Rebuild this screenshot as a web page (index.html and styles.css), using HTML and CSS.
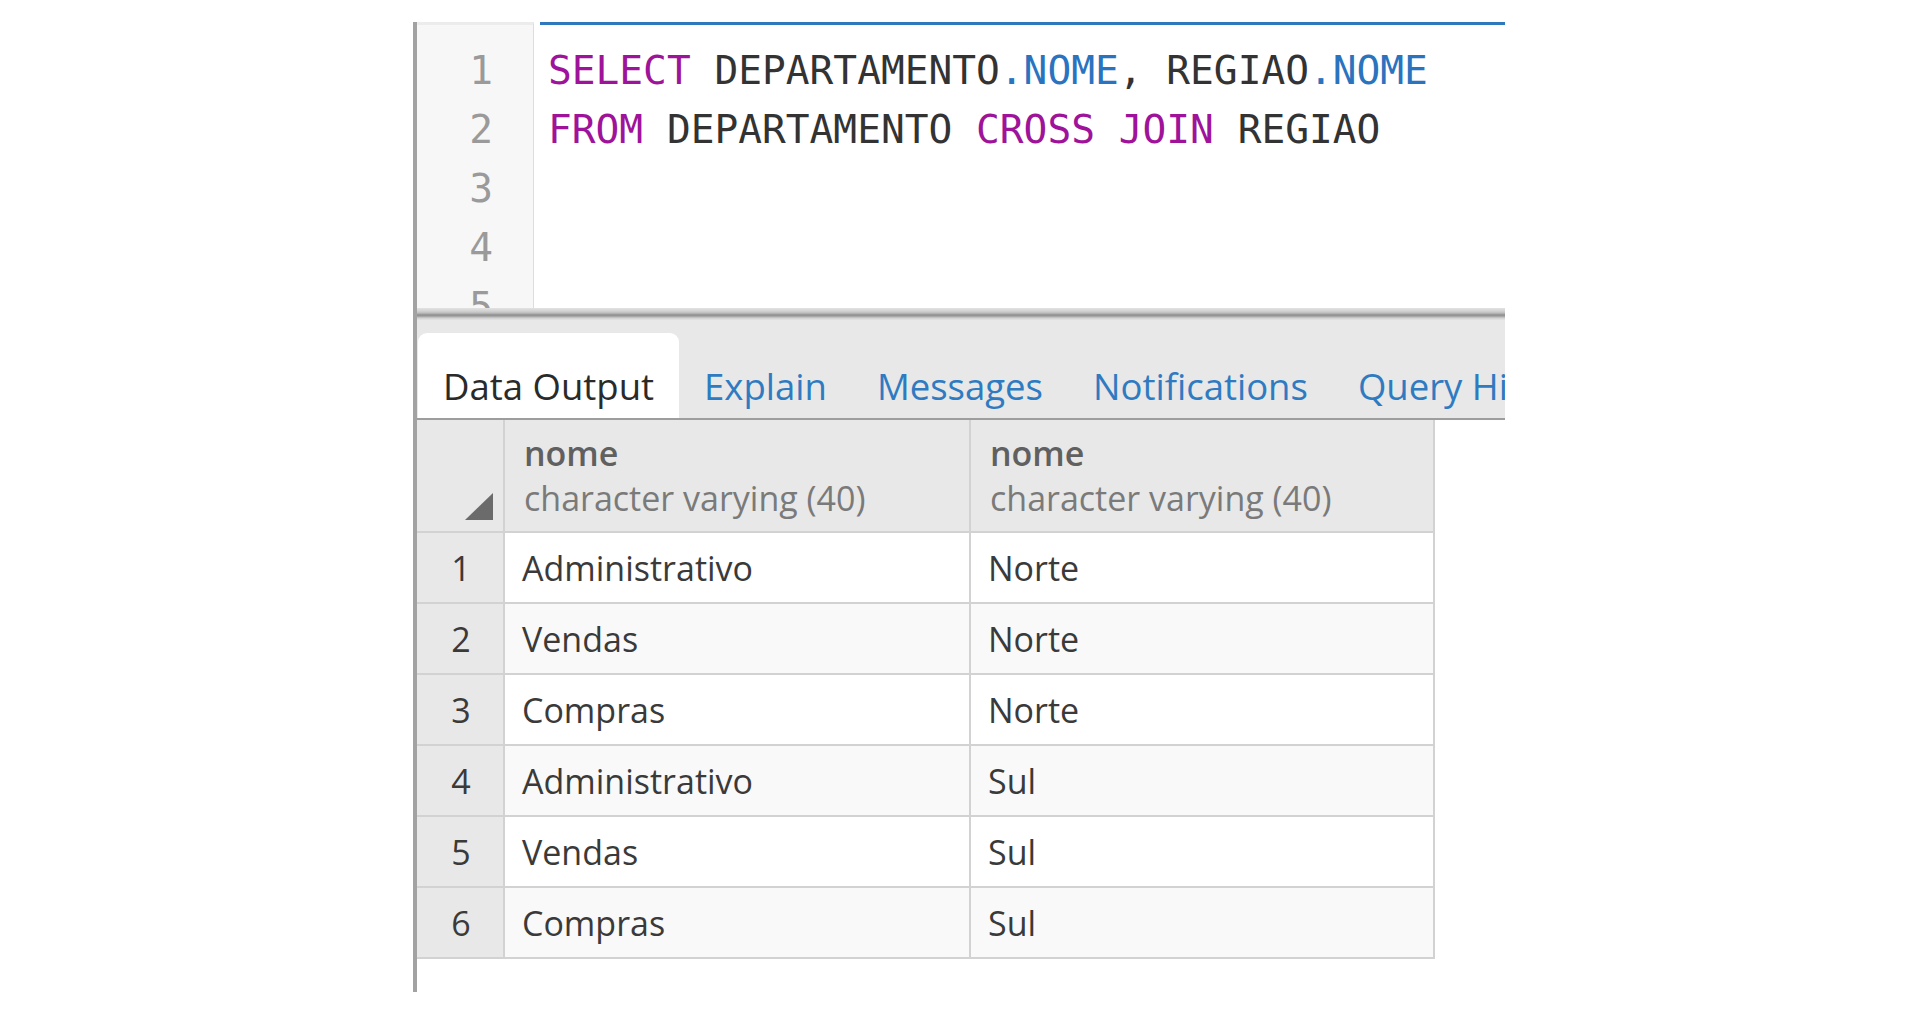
FILE: index.html
```html
<!DOCTYPE html>
<html>
<head>
<meta charset="utf-8">
<title>Query Tool</title>
<link rel="stylesheet" href="styles.css">
</head>
<body>
<div class="panel">
  <div class="editor">
    <div class="gutter">
      <div class="ln">1</div>
      <div class="ln">2</div>
      <div class="ln">3</div>
      <div class="ln">4</div>
      <div class="ln">5</div>
    </div>
    <div class="code">
      <div class="line"><span class="kw">SELECT</span> DEPARTAMENTO<span class="prop">.NOME</span>, REGIAO<span class="prop">.NOME</span></div>
      <div class="line"><span class="kw">FROM</span> DEPARTAMENTO <span class="kw">CROSS</span> <span class="kw">JOIN</span> REGIAO</div>
      <div class="line"> </div>
      <div class="line"> </div>
      <div class="line"> </div>
    </div>
  </div>
  <div class="splitter"></div>
  <div class="tabs">
    <div class="tab active">Data Output</div>
    <div class="tab">Explain</div>
    <div class="tab">Messages</div>
    <div class="tab">Notifications</div>
    <div class="tab">Query History</div>
  </div>
  <div class="grid">
    <div class="hcell corner">
      <svg class="resize" width="28" height="27" viewBox="0 0 28 27"><polygon points="28,0 28,27 0,27" fill="#6b6b6b"/></svg>
    </div>
    <div class="hcell col"><div class="cname">nome</div><div class="ctype">character varying (40)</div></div>
    <div class="hcell col"><div class="cname">nome</div><div class="ctype">character varying (40)</div></div>

    <div class="rn">1</div><div class="cell">Administrativo</div><div class="cell">Norte</div>
    <div class="rn">2</div><div class="cell even">Vendas</div><div class="cell even">Norte</div>
    <div class="rn">3</div><div class="cell">Compras</div><div class="cell">Norte</div>
    <div class="rn">4</div><div class="cell even">Administrativo</div><div class="cell even">Sul</div>
    <div class="rn">5</div><div class="cell">Vendas</div><div class="cell">Sul</div>
    <div class="rn">6</div><div class="cell even">Compras</div><div class="cell even">Sul</div>
  </div>
</div>
</body>
</html>
```

FILE: styles.css
```css
html, body {
  margin: 0;
  padding: 0;
  background: #ffffff;
}

body {
  width: 1920px;
  height: 1014px;
  overflow: hidden;
}

.panel {
  margin: 22px 0 0 413px;
  width: 1092px;
  height: 970px;
  box-sizing: border-box;
  border-left: 4px solid #a2a2a2;
  overflow: hidden;
  display: flex;
  flex-direction: column;
  background: #ffffff;
}

/* ---------- editor ---------- */
.editor {
  height: 286px;
  flex-shrink: 0;
  display: flex;
  overflow: hidden;
  font-family: "DejaVu Sans Mono", "Liberation Mono", monospace;
  font-size: 39.5px;
  line-height: 59px;
}

.gutter {
  width: 117px;
  flex-shrink: 0;
  box-sizing: border-box;
  background: #f7f7f7;
  border-top: 3px solid #ececec;
  border-right: 1px solid #dddddd;
  padding-top: 16px;
  padding-right: 40px;
  text-align: right;
  color: #9a9a9a;
}

.code {
  flex: 1;
  margin-left: 6px;
  border-top: 3px solid #2f78bd;
  padding-top: 16px;
  padding-left: 8px;
  color: #333333;
}

.line {
  white-space: pre;
  height: 59px;
}

.kw {
  color: #9e1399;
}

.prop {
  color: #2a73bf;
}

/* ---------- splitter ---------- */
.splitter {
  height: 12px;
  flex-shrink: 0;
  background: linear-gradient(to bottom, #e2e2e2 0px, #d2d2d2 3px, #bdbdbd 5px, #8e8e8e 7px, #9a9a9a 8px, #cfcfcf 10px, #e4e4e4 12px);
}

/* ---------- tabs ---------- */
.tabs {
  height: 100px;
  flex-shrink: 0;
  box-sizing: border-box;
  background: #e8e8e8;
  border-bottom: 2px solid #9d9d9d;
  display: flex;
  align-items: flex-end;
  font-family: "Open Sans", "Noto Sans", sans-serif;
  font-size: 36.5px;
  white-space: nowrap;
}

.tab {
  flex-shrink: 0;
  height: 85px;
  box-sizing: border-box;
  padding: 28px 25px 0 25px;
  line-height: 50px;
  color: #2f7bc1;
}

.tab.active {
  margin-left: 1px;
  background: #ffffff;
  color: #2a2a2a;
  border-radius: 9px 9px 0 0;
}

/* ---------- grid ---------- */
.grid {
  display: grid;
  grid-template-columns: 88px 466px 464px;
  grid-template-rows: 113px repeat(6, 71px);
  font-family: "Open Sans", "Noto Sans", sans-serif;
  font-size: 34px;
  color: #3a3a3a;
}

.grid > div {
  box-sizing: border-box;
  border-right: 2px solid #d2d2d2;
  border-bottom: 2px solid #d2d2d2;
}

.hcell {
  background: #e8e8e8;
}

.corner {
  display: flex;
  align-items: flex-end;
  justify-content: flex-end;
  padding: 0 10px 11px 0;
}

.resize {
  display: block;
}

.col {
  padding: 11px 0 0 19px;
  line-height: 45px;
  white-space: nowrap;
}

.cname {
  color: #606060;
  font-weight: 600;
}

.ctype {
  color: #7a7a7a;
}

.rn {
  background: #e8e8e8;
  display: flex;
  align-items: center;
  justify-content: center;
  padding-left: 2px;
  color: #3a3a3a;
}

.cell {
  display: flex;
  align-items: center;
  padding-left: 17px;
  background: #ffffff;
}

.cell.even {
  background: #f9f9f9;
}
```
